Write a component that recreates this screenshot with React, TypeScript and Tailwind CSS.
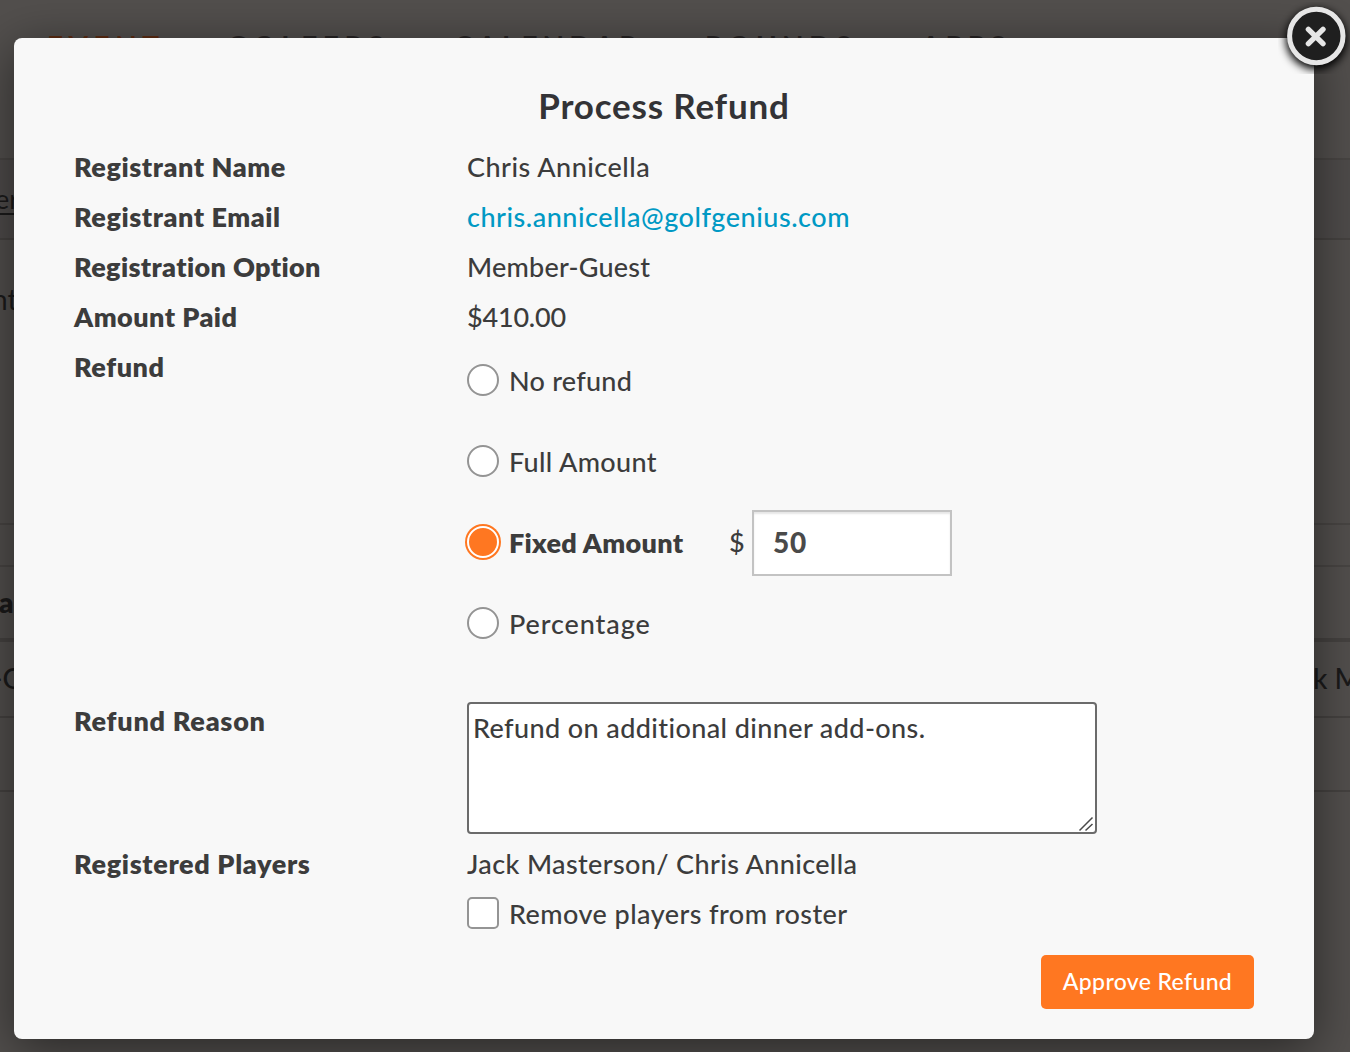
import React, { useState } from "react";

type RefundOption = {
  id: string;
  label: string;
  className: string;
};

const refundOptions: RefundOption[] = [
  { id: "none", label: "No refund", className: "tracking-[0.25px]" },
  { id: "full", label: "Full Amount", className: "tracking-[0.35px]" },
  { id: "fixed", label: "Fixed Amount", className: "tracking-[0.3px]" },
  { id: "percentage", label: "Percentage", className: "tracking-[0.9px]" },
];

type RowProps = {
  label: string;
  labelClass?: string;
  children: React.ReactNode;
};

const Row = ({ label, labelClass = "tracking-[0.55px]", children }: RowProps) => (
  <div className="flex min-h-[50px] leading-[48px]">
    <div className="w-[393px] shrink-0 font-extrabold">
      <span className={labelClass}>{label}</span>
    </div>
    <div className="grow tracking-[0.45px]">{children}</div>
  </div>
);

const PageBehind = () => (
  <div className="absolute inset-0 bg-[#524f4d] text-[28px] leading-none text-[#1b1a1a]">
    <div className="h-[160px] border-b-2 border-[#484543] pt-[32px] pl-[47px]">
      <ul className="flex whitespace-nowrap text-[28px] font-bold tracking-[5px] text-[#272424]">
        <li className="w-[180px] tracking-[5.5px] text-[#5d2c12]">EVENT</li>
        <li className="w-[227px] tracking-[5.6px]">GOLFERS</li>
        <li className="w-[251px]">CALENDAR</li>
        <li className="w-[216px] tracking-[5.3px]">ROUNDS</li>
        <li>APPS</li>
      </ul>
    </div>
    <div className="h-[80px] border-b-2 border-[#454240] bg-[#4e4b4a] pt-[24px]">
      <span className="-ml-[5px] text-[27px] underline underline-offset-4">er</span>
    </div>
    <div className="h-[285px] border-b-2 border-[#484543] pt-[45px]">
      <span className="-ml-[8px]">nt</span>
    </div>
    <div className="h-[42px] border-b-2 border-[#484543]" />
    <div className="h-[75px] border-b-4 border-[#454240] pt-[21px] font-extrabold">
      <span className="-ml-[1px]">a</span>
    </div>
    <div className="flex h-[76px] justify-between border-b-2 border-[#454240] pt-[22px] font-medium whitespace-nowrap">
      <span className="-ml-[8px]">-G</span>
      <span className="w-[37px]">k M</span>
    </div>
    <div className="h-[74px] border-b-2 border-[#454240]" />
  </div>
);

const CloseButton = () => (
  <button className="absolute top-[2px] left-[1278px] h-[72px] w-[72px] overflow-hidden" aria-label="Close">
    <svg viewBox="0 0 72 72" className="h-full w-full">
      <defs>
        <filter id="glow" x="-30%" y="-30%" width="160%" height="160%">
          <feGaussianBlur stdDeviation="4" />
        </filter>
      </defs>
      <circle cx="38.3" cy="37" r="30.5" fill="#000" filter="url(#glow)" />
      <circle cx="38.3" cy="34" r="26.7" fill="#1f1f1f" stroke="#e6e6e6" strokeWidth="5" />
      <path d="M30.4 27.4l14.6 14.2M45 27.4L30.4 41.6" stroke="#e6e6e6" strokeWidth="5.4" strokeLinecap="round" />
    </svg>
  </button>
);

const App = () => {
  const [selected, setSelected] = useState("fixed");
  const [amount, setAmount] = useState("50");
  const [reason, setReason] = useState("Refund on additional dinner add-ons.");
  const [remove, setRemove] = useState(false);

  return (
    <div className="relative h-[1052px] w-[1350px] overflow-hidden font-['Lato',sans-serif]">
      <PageBehind />
      <div className="relative mt-[38px] ml-[14px] h-[1001px] w-[1300px] rounded-lg bg-[#f8f8f8] px-[60px] pt-[43px] text-[27px] font-medium text-[#3c3c3c] shadow-[0_10px_50px_rgba(0,0,0,0.5)]">
        <h1 className="mb-[14px] text-center text-[35px] leading-[48px] font-bold tracking-[0.8px] text-[#333336]">
          Process Refund
        </h1>

        <Row label="Registrant Name">
          <span className="tracking-[0.5px]">Chris Annicella</span>
        </Row>
        <Row label="Registrant Email">
          <a href="#" className="tracking-[0.52px] text-[#0099c4]">chris.annicella@golfgenius.com</a>
        </Row>
        <Row label="Registration Option" labelClass="tracking-[0.36px]">
          <span className="tracking-[0.22px]">Member-Guest</span>
        </Row>
        <Row label="Amount Paid" labelClass="tracking-[0.45px]">
          <span className="tracking-[-0.2px]">$410.00</span>
        </Row>
        <Row label="Refund">
          <div className="-mt-[4px] h-[358px]">
            {refundOptions.map((option) => (
              <div key={option.id} className="flex h-[81px] items-center">
                <label className="flex items-center">
                  <input
                    type="radio"
                    name="refund"
                    checked={selected === option.id}
                    onChange={() => setSelected(option.id)}
                    className="mr-[10px] h-8 w-8 appearance-none rounded-full border-2 border-[#949494] bg-white checked:border-white checked:bg-[#ff7721] checked:ring-2 checked:ring-[#ff7721]"
                  />
                  <span className={selected === option.id ? "pt-[2px] font-extrabold" : "pt-[2px]"}>
                    <span className={option.className}>{option.label}</span>
                  </span>
                </label>
                {option.id === "fixed" && (
                  <div className="ml-auto flex w-[525px] items-center">
                    <span className="w-[23px]">$</span>
                    <input
                      value={amount}
                      onChange={(e) => setAmount(e.target.value)}
                      className="mt-[2px] h-[66px] w-[200px] border-2 border-[#c3c3c3] bg-white px-[19px] pb-[2px] text-[28px] font-black tracking-[0.8px] text-[#4a4a4a] shadow-[inset_0_2px_2px_rgba(0,0,0,0.1)]"
                    />
                  </div>
                )}
              </div>
            ))}
          </div>
        </Row>
        <Row label="Refund Reason" labelClass="tracking-[0.75px]">
          <div className="h-[143px] pt-[5px]">
            <textarea
              value={reason}
              onChange={(e) => setReason(e.target.value)}
              className="block h-[132px] w-[630px] resize-none rounded-[4px] border-2 border-[#6b6b6b] bg-white px-1 pt-1 leading-[40px] tracking-[0.4px]"
            />
          </div>
        </Row>
        <Row label="Registered Players" labelClass="tracking-[0.65px]">
          <div className="h-[50px] tracking-[0.37px]">Jack Masterson/ Chris Annicella</div>
          <label className="flex h-[46px] items-center tracking-[0.44px]">
            <input
              type="checkbox"
              checked={remove}
              onChange={() => setRemove(!remove)}
              className="mr-[10px] h-8 w-8 appearance-none rounded-[5px] border-2 border-[#949494] bg-white"
            />
            <span className="pt-[2px]">Remove players from roster</span>
          </label>
        </Row>

        <div className="mt-[19px] flex justify-end">
          <button className="h-[54px] w-[213px] rounded-[5px] bg-[#ff7721] pb-[2px] text-[23px] font-medium tracking-[0.35px] text-white">
            Approve Refund
          </button>
        </div>

        {/* resize grip of the textarea */}
        <svg className="absolute top-[778px] left-[1064px] h-[16px] w-[16px]" viewBox="0 0 16 16">
          <path d="M1.5 14.5L14.5 1.5M7.5 14.5L14.5 8" stroke="#4a4a4a" strokeWidth="1.5" />
        </svg>
      </div>
      <CloseButton />
    </div>
  );
};

export default App;
